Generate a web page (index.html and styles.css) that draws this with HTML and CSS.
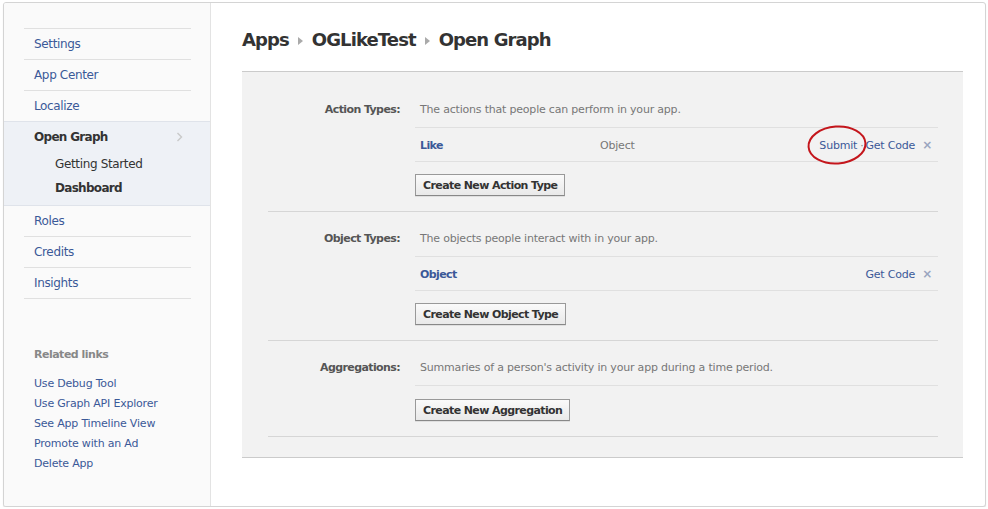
FILE: index.html
```html
<!DOCTYPE html>
<html>
<head>
<meta charset="utf-8">
<title>Open Graph</title>
<link rel="stylesheet" href="styles.css">
</head>
<body>
<div class="frame">
  <aside class="sidebar">
    <ul class="nav">
      <li class="nav-item"><a href="#">Settings</a></li>
      <li class="nav-item"><a href="#">App Center</a></li>
      <li class="nav-item"><a href="#">Localize</a></li>
      <li class="nav-item nav-active">
        <div class="nav-head">
          <span>Open Graph</span>
          <svg class="chev" width="7" height="10" viewBox="0 0 7 10"><polyline points="1.5,1 5.5,5 1.5,9" fill="none" stroke="#c9c9c9" stroke-width="1.4"/></svg>
        </div>
        <ul class="subnav">
          <li>Getting Started</li>
          <li class="sub-cur">Dashboard</li>
        </ul>
      </li>
      <li class="nav-item"><a href="#">Roles</a></li>
      <li class="nav-item"><a href="#">Credits</a></li>
      <li class="nav-item"><a href="#">Insights</a></li>
    </ul>
    <div class="related">
      <h4 class="related-title">Related links</h4>
      <ul class="related-list">
        <li><a href="#">Use Debug Tool</a></li>
        <li><a href="#">Use Graph API Explorer</a></li>
        <li><a href="#">See App Timeline View</a></li>
        <li><a href="#">Promote with an Ad</a></li>
        <li><a href="#">Delete App</a></li>
      </ul>
    </div>
  </aside>
  <main class="main">
    <h1 class="crumbs">
      <span>Apps</span><i class="tri"></i><span>OGLikeTest</span><i class="tri"></i><span>Open Graph</span>
    </h1>
    <div class="panel">
      <section class="sec">
        <div class="sec-label">Action Types:</div>
        <div class="sec-body">
          <p class="desc">The actions that people can perform in your app.</p>
          <div class="list">
            <div class="row">
              <a class="row-name" href="#">Like</a>
              <span class="row-type">Object</span>
              <span class="row-actions">
                <span class="submit"><a href="#">Submit</a>
                  <svg class="circle" width="62" height="42" viewBox="0 0 62 42"><ellipse cx="31" cy="21" rx="28.5" ry="18.5" transform="rotate(-4 31 21)" fill="none" stroke="#c4161c" stroke-width="2"/></svg>
                </span>
                <span class="dot">·</span><a href="#">Get Code</a><span class="x">×</span>
              </span>
            </div>
          </div>
          <button class="btn">Create New Action Type</button>
        </div>
      </section>
      <section class="sec">
        <div class="sec-label">Object Types:</div>
        <div class="sec-body">
          <p class="desc">The objects people interact with in your app.</p>
          <div class="list">
            <div class="row">
              <a class="row-name" href="#">Object</a>
              <span class="row-type"></span>
              <span class="row-actions"><a href="#">Get Code</a><span class="x">×</span></span>
            </div>
          </div>
          <button class="btn">Create New Object Type</button>
        </div>
      </section>
      <section class="sec">
        <div class="sec-label">Aggregations:</div>
        <div class="sec-body">
          <p class="desc">Summaries of a person's activity in your app during a time period.</p>
          <div class="list list-empty"></div>
          <button class="btn btn-last">Create New Aggregation</button>
        </div>
      </section>
    </div>
  </main>
</div>
</body>
</html>
```

FILE: styles.css
```css
* { box-sizing: border-box; }
html, body { margin: 0; padding: 0; background: #fff; }
body {
  font-family: "DejaVu Sans", "Lucida Grande", sans-serif;
  font-size: 11px;
  color: #333;
}
a { color: #3b5998; text-decoration: none; }
ul { list-style: none; margin: 0; padding: 0; }

.frame {
  margin: 2px 0 0 3px;
  width: 983px;
  height: 505px;
  border: 1px solid #d4d4d4;
  border-radius: 3px;
  box-shadow: 0 1px 1px rgba(0,0,0,0.12);
  display: flex;
  overflow: hidden;
  background: #fff;
}

/* sidebar */
.sidebar {
  width: 207px;
  flex: none;
  background: #fafafa;
  border-right: 1px solid #e3e3e3;
  padding-top: 25px;
}
.nav { margin: 0 19px 0 20px; }
.nav-item {
  border-top: 1px solid #e0e0e0;
  font-size: 12px;
  letter-spacing: -0.35px;
  line-height: 30px;
}
.nav-item a { display: block; padding-left: 10px; }
.nav-item:last-child { border-bottom: 1px solid #e0e0e0; }
.nav-active {
  margin: 0 -19px 0 -20px;
  padding: 0 19px 5px 20px;
  background: #eef1f6;
  border-top: 1px solid #dfe3ea;
  border-bottom: 1px solid #dfe3ea;
}
.nav-active + .nav-item { border-top: 0; }
.nav-head {
  display: flex;
  align-items: center;
  justify-content: space-between;
  padding: 0 8px 0 10px;
  font-weight: bold;
  color: #333;
  letter-spacing: -0.7px;
}
.chev { display: block; }
.subnav { padding-left: 31px; }
.subnav li { line-height: 24px; color: #333; }
.subnav .sub-cur { font-weight: bold; letter-spacing: -0.7px; }

.related { margin: 49px 0 0 30px; }
.related-title {
  margin: 0 0 12px;
  font-size: 11px;
  line-height: 14px;
  font-weight: bold;
  color: #888;
  letter-spacing: -0.5px;
}
.related-list li { line-height: 20px; letter-spacing: -0.2px; }

/* main */
.main {
  flex: 1;
  padding: 0 22px 0 31px;
}
.crumbs {
  margin: 0;
  padding-top: 26px;
  display: flex;
  align-items: center;
  gap: 8px;
  font-size: 18px;
  line-height: 22px;
  font-weight: bold;
  color: #333;
  letter-spacing: -0.9px;
}
.tri {
  width: 0;
  height: 0;
  margin: 2px 1px 0;
  border-left: 5px solid #aaa;
  border-top: 4px solid transparent;
  border-bottom: 4px solid transparent;
}
.panel {
  margin-top: 20px;
  background: #f2f2f2;
  border-top: 1px solid #cbcbcb;
  border-bottom: 1px solid #cbcbcb;
  padding: 11px 25px 20px 26px;
}
.sec {
  display: grid;
  grid-template-columns: 132px 1fr;
  column-gap: 15px;
  padding: 19px 0 15px;
  border-bottom: 1px solid #d6d6d6;
}
.sec-label {
  text-align: right;
  font-weight: bold;
  color: #555;
  line-height: 14px;
  padding-top: 1px;
  letter-spacing: -0.6px;
}
.desc {
  margin: 0 0 10px;
  padding: 1px 0 0 5px;
  line-height: 14px;
  color: #777;
  letter-spacing: -0.2px;
}
.list { border-top: 1px solid #e0e0e0; }
.row {
  display: flex;
  align-items: center;
  height: 34px;
  line-height: 33px;
  border-bottom: 1px solid #e0e0e0;
  padding: 2px 6px 0 5px;
}
.row-name { width: 180px; font-weight: bold; letter-spacing: -0.6px; }
.row-type { color: #777; letter-spacing: -0.2px; }
.row-actions { margin-left: auto; display: flex; align-items: center; letter-spacing: -0.2px; }
.submit { position: relative; display: inline-block; }
.circle { position: absolute; left: -13px; top: -5px; pointer-events: none; }
.dot { color: #888; margin: 0 2px 0 3px; }
.x { color: #9aa5bf; font-weight: bold; font-size: 12px; margin-left: 7px; }
.btn {
  display: block;
  margin-top: 12px;
  height: 22px;
  padding: 1px 7px 0;
  border: 1px solid #999;
  border-bottom-color: #888;
  background: linear-gradient(#fafafa, #e9e9e9);
  box-shadow: 0 1px 0 rgba(0,0,0,0.08);
  font-family: "DejaVu Sans", "Lucida Grande", sans-serif;
  font-size: 11px;
  font-weight: bold;
  color: #333;
  letter-spacing: -0.6px;
  line-height: 19px;
}
.list-empty + .btn { margin-top: 13px; }
```
